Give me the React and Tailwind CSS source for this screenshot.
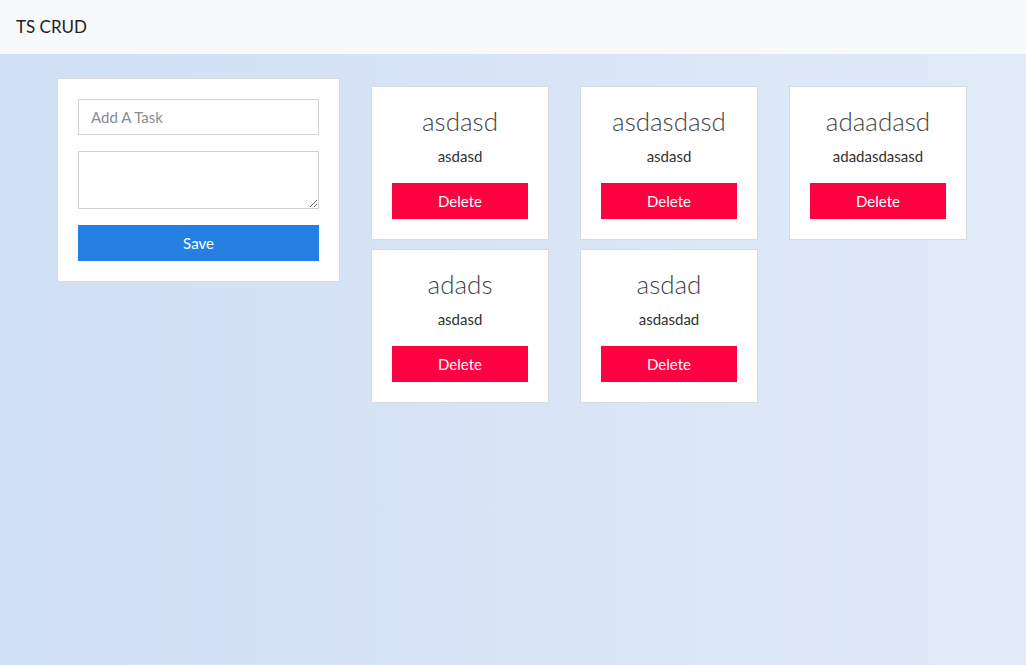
import React, { useState } from 'react';

const initialTasks = [
  { id: 1, title: 'asdasd', body: 'asdasd' },
  { id: 2, title: 'asdasdasd', body: 'asdasd' },
  { id: 3, title: 'adaadasd', body: 'adadasdasasd' },
  { id: 4, title: 'adads', body: 'asdasd' },
  { id: 5, title: 'asdad', body: 'asdasdad' },
];

const App = () => {
  const [tasks, setTasks] = useState(initialTasks);
  const [title, setTitle] = useState('');
  const [body, setBody] = useState('');

  const save = (e) => {
    e.preventDefault();
    if (!title) return;
    setTasks([...tasks, { id: Date.now(), title, body }]);
    setTitle('');
    setBody('');
  };

  return (
    <div className="min-h-[665px] bg-gradient-to-r from-[#cfdff4] to-[#e1eaf9] font-['Lato','Liberation_Sans',sans-serif] text-[#212529]">
      {/* Navbar */}
      <nav className="h-[54px] bg-[#f8f9fa] flex items-center px-4">
        <span className="text-[17px] text-[#222]">TS CRUD</span>
      </nav>

      <div className="flex items-start pl-[57px] pt-[24px]">
        {/* Form */}
        <form onSubmit={save} className="w-[283px] shrink-0 bg-white border border-[#d6dbe2] p-5 flex flex-col">
          <input
            value={title}
            onChange={(e) => setTitle(e.target.value)}
            placeholder="Add A Task"
            className="h-9 border border-[#ced4da] px-3 text-[15px] placeholder:text-[#868e96] outline-none"
          />
          <textarea
            value={body}
            onChange={(e) => setBody(e.target.value)}
            className="mt-4 h-[58px] border border-[#ced4da] px-3 py-1 text-[15px] outline-none"
          />
          <button type="submit" className="mt-4 h-9 bg-[#2680e3] text-white text-[15px]">
            Save
          </button>
        </form>

        {/* Tasks */}
        <div className="ml-[31px] pt-2 w-[620px] flex flex-wrap gap-x-[31px] gap-y-[9px]">
          {tasks.map((task) => (
            <div key={task.id} className="w-[178px] h-[154px] bg-white border border-[#d6dbe2] px-5 pt-4 flex flex-col items-center">
              <h3 className="text-[26px] font-light leading-[36px] text-[#444]">{task.title}</h3>
              <p className="mt-[7px] text-[15px] leading-5 text-[#333]">{task.body}</p>
              <button
                onClick={() => setTasks(tasks.filter((t) => t.id !== task.id))}
                className="mt-[17px] w-full h-9 bg-[#ff0040] text-white text-[15px]"
              >
                Delete
              </button>
            </div>
          ))}
        </div>
      </div>
    </div>
  );
};

export default App;
